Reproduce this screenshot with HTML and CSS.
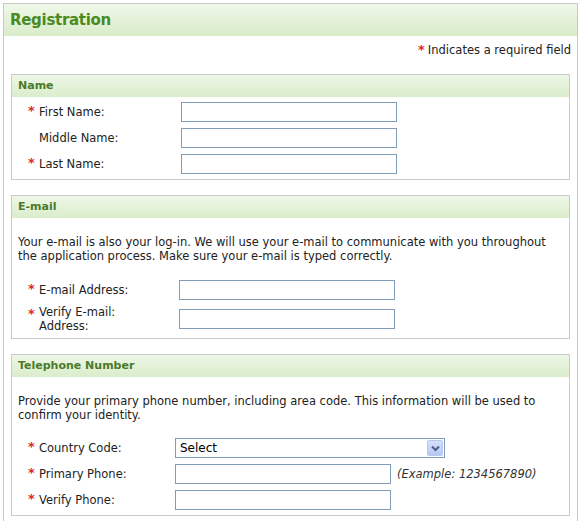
FILE: index.html
```html
<!DOCTYPE html>
<html lang="en">
<head>
  <meta charset="UTF-8">
  <title>Registration</title>
  <link rel="stylesheet" href="styles.css">
</head>
<body>
  <div class="page">
    <div class="page-head"><h1>Registration</h1></div>

    <div class="req-note"><span class="star">*</span>Indicates a required field</div>

    <div class="section">
      <div class="section-head">Name</div>
      <div class="rows name-rows">
        <div class="row"><span class="star">*</span><label>First Name:</label><input type="text"></div>
        <div class="row"><span class="star"></span><label>Middle Name:</label><input type="text"></div>
        <div class="row"><span class="star">*</span><label>Last Name:</label><input type="text"></div>
      </div>
    </div>

    <div class="section">
      <div class="section-head">E-mail</div>
      <p class="intro mail-intro">Your e-mail is also your log-in. We will use your e-mail to communicate with you throughout the application process. Make sure your e-mail is typed correctly.</p>
      <div class="rows mail-rows">
        <div class="row"><span class="star">*</span><label>E-mail Address:</label><input type="text"></div>
        <div class="row"><span class="star">*</span><label>Verify E-mail:<br>Address:</label><input type="text"></div>
      </div>
    </div>

    <div class="section">
      <div class="section-head">Telephone Number</div>
      <p class="intro">Provide your primary phone number, including area code. This information will be used to confirm your identity.</p>
      <div class="rows phone-rows">
        <div class="row"><span class="star">*</span><label>Country Code:</label>
          <div class="select-box">
            <select><option>Select</option></select>
            <span class="select-btn">
              <svg width="9" height="7" viewBox="0 0 9 7"><path d="M1 1.5 L4.5 5 L8 1.5" fill="none" stroke="#4d6185" stroke-width="2"/></svg>
            </span>
          </div>
        </div>
        <div class="row"><span class="star">*</span><label>Primary Phone:</label><input type="text"><span class="example">(Example: 1234567890)</span></div>
        <div class="row"><span class="star">*</span><label>Verify Phone:</label><input type="text"></div>
      </div>
    </div>
  </div>
</body>
</html>
```

FILE: styles.css
```css
* { box-sizing: border-box; }
body {
  margin: 0;
  font-family: "DejaVu Sans", Verdana, sans-serif;
  font-size: 11.5px;
  color: #222;
  background: #fff;
}
.page {
  margin: 3px 4px 0 3px;
  border: 1px solid #c8c8c8;
  border-bottom: none;
  padding-bottom: 20px;
}
.page-head {
  height: 32px;
  background: linear-gradient(#f0f8ea, #d9ecc9);
  padding-left: 6px;
  display: flex;
  align-items: center;
}
h1 {
  margin: 0;
  font-size: 15px;
  letter-spacing: -0.3px;
  font-weight: bold;
  color: #4a8a1f;
}
.req-note {
  text-align: right;
  padding: 7px 6px 0;
  height: 38px;
  line-height: 14px;
}
.star {
  color: #e0262b;
  font-weight: bold;
  font-size: 13px;
}
.req-note .star { margin-right: 3px; }
.section {
  margin: 0 7px 15px;
  border: 1px solid #cacaca;
}
.section-head {
  height: 22px;
  line-height: 22px;
  padding-left: 6px;
  font-size: 11px;
  font-weight: bold;
  color: #4a7a2a;
  background: linear-gradient(#eef7e7, #daedcb);
}
.intro {
  margin: 17px 14px 16px 6px;
  line-height: 14px;
}
.mail-intro { margin-bottom: 17px; }
.rows {
  display: flex;
  flex-direction: column;
  gap: 6px;
  padding: 5px 0 5px 16px;
}
.intro + .rows { padding-top: 0; }
.mail-rows { gap: 5px; }
.row {
  display: flex;
  align-items: center;
}
.row .star {
  width: 11px;
  line-height: 14px;
  align-self: flex-start;
  margin-top: 2px;
}
.row label { line-height: 14px; }
.name-rows label { width: 142px; }
.mail-rows label { width: 140px; }
.phone-rows label { width: 136px; }
input[type="text"] {
  width: 216px;
  height: 20px;
  border: 1px solid #7f9db9;
  margin: 0;
  padding: 0 3px;
  font: inherit;
}
.select-box {
  position: relative;
  width: 270px;
  height: 20px;
}
select {
  appearance: none;
  width: 100%;
  height: 100%;
  border: 1px solid #7f9db9;
  border-radius: 0;
  background: #fff;
  margin: 0;
  padding: 0 4px;
  font: inherit;
  font-size: 12px;
  color: #000;
}
.select-btn {
  position: absolute;
  top: 2px;
  right: 2px;
  width: 16px;
  height: 16px;
  border: 1px solid #b8c9ef;
  border-radius: 2px;
  background: linear-gradient(#d5e1fb, #b6c9f6);
  display: flex;
  align-items: center;
  justify-content: center;
}
.example {
  margin-left: 6px;
  font-style: italic;
  color: #333;
}
```
